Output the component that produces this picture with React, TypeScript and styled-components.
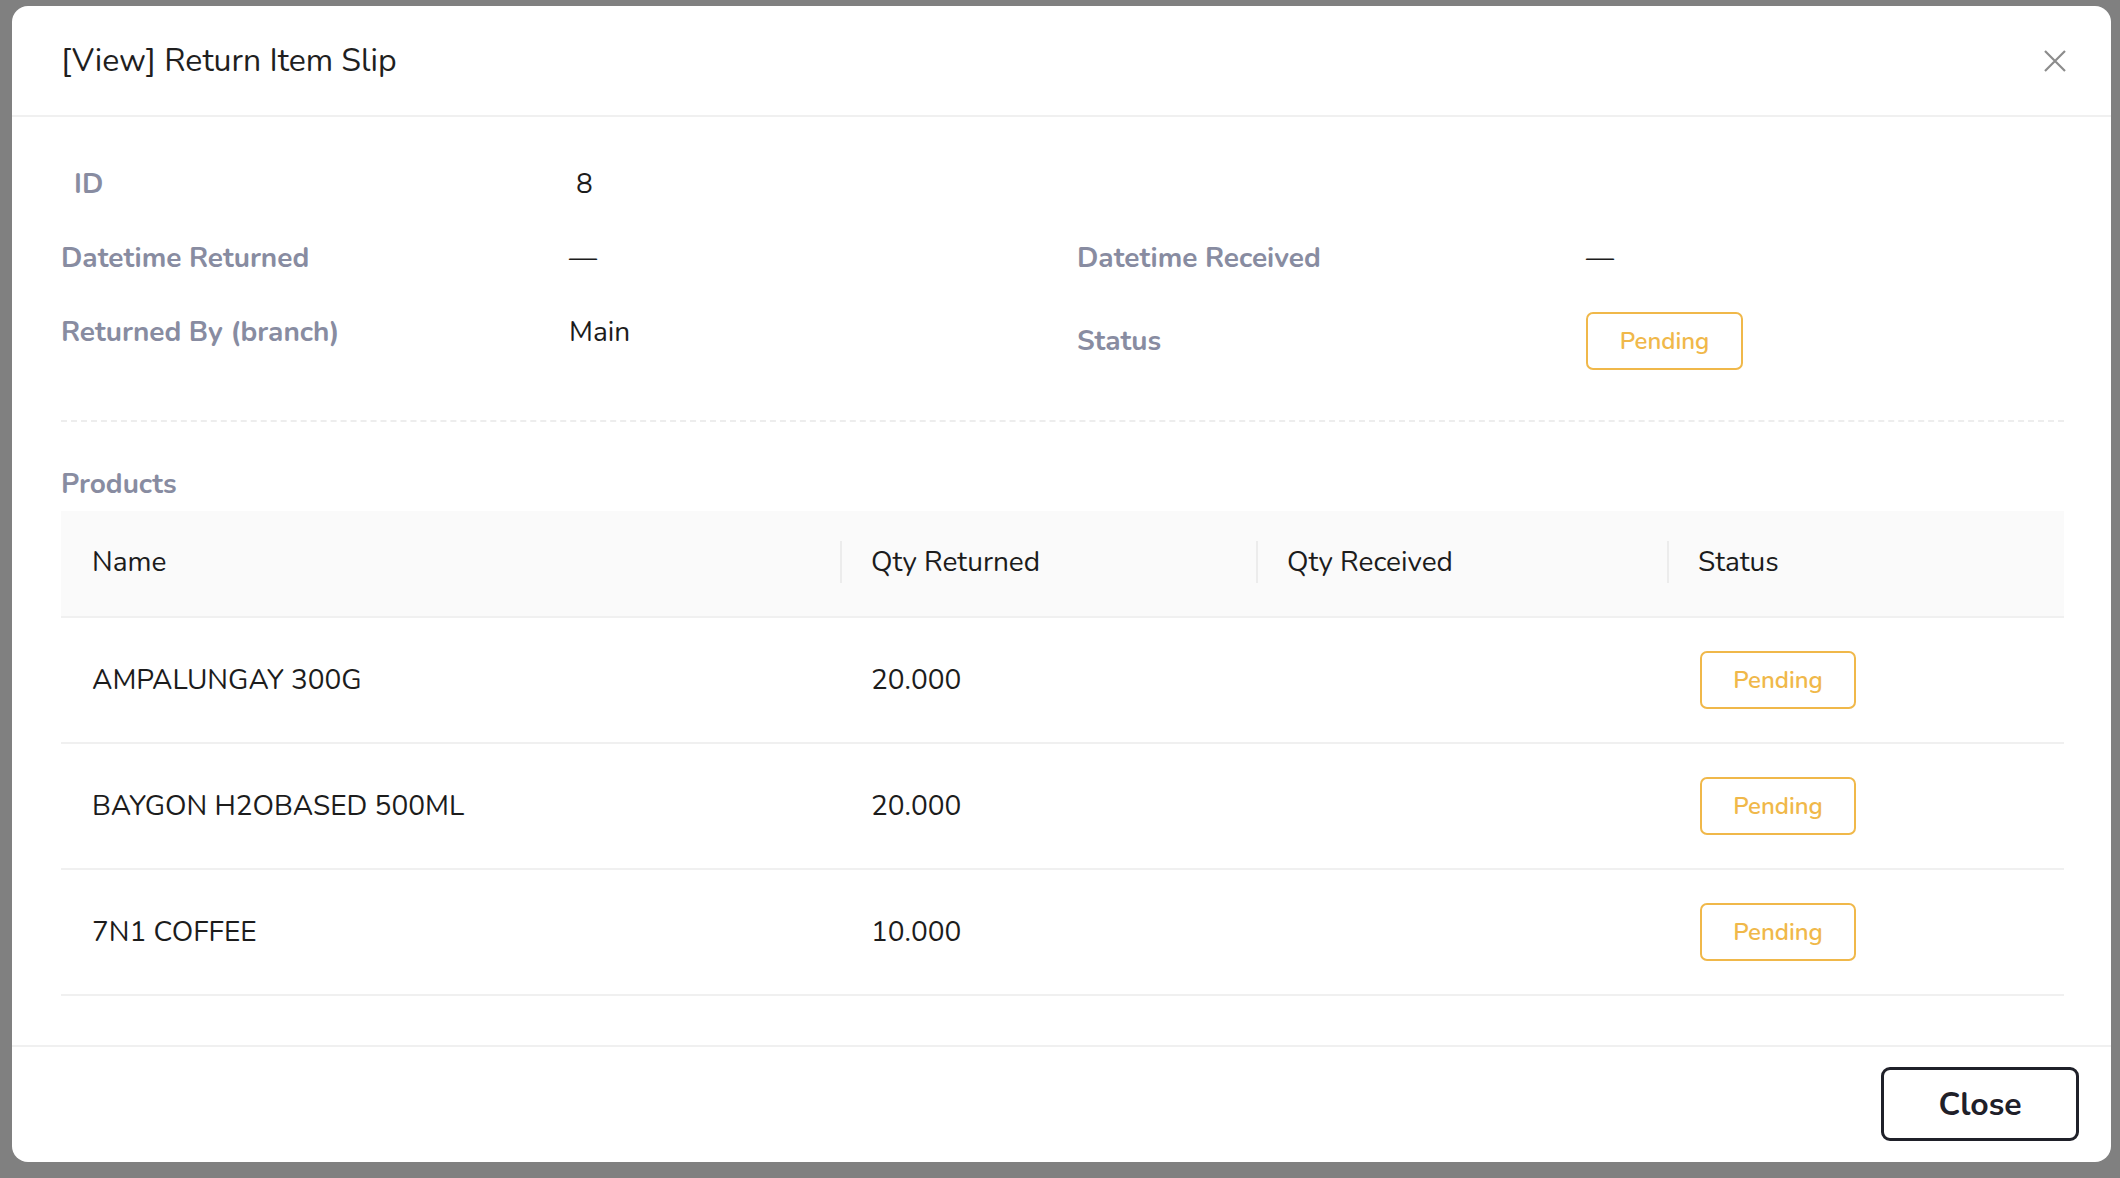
import React from "react";
import styled, { createGlobalStyle } from "styled-components";

const Global = createGlobalStyle`
  html, body { margin: 0; padding: 0; }
  body { font-family: "Nunito", "Lato", "Open Sans", sans-serif; }
  * { box-sizing: border-box; }
`;

const Backdrop = styled.div`
  width: 2120px;
  height: 1178px;
  background: #808080;
  padding: 6px 9px 16px 12px;
  display: flex;
`;

const Modal = styled.div`
  flex: 1;
  background: #ffffff;
  border-radius: 16px;
  display: flex;
  flex-direction: column;
  overflow: hidden;
`;

const Header = styled.div`
  height: 111px;
  flex: none;
  display: flex;
  align-items: center;
  justify-content: space-between;
  padding: 0 44px 0 49px;
  border-bottom: 2px solid #f0f0f0;
`;

const Title = styled.h1`
  margin: 0;
  font-size: 32px;
  font-weight: 400;
  color: #1f1f1f;
  line-height: 40px;
`;

const CloseIcon = styled.button`
  border: none;
  background: none;
  padding: 0;
  width: 24px;
  height: 24px;
  display: flex;
  align-items: center;
  justify-content: center;
  cursor: pointer;
`;

const Body = styled.div`
  flex: 1;
  padding: 47px 47px 49px 49px;
  display: flex;
  flex-direction: column;
  border-bottom: 2px solid #f0f0f0;
`;

const InfoGrid = styled.div`
  display: grid;
  grid-template-columns: 508px 508px 509px 1fr;
  row-gap: 34px;
  align-items: start;
  padding-bottom: 50px;
  border-bottom: 2px dashed #ededed;
`;

const Label = styled.div<{ $indent?: number; $center?: boolean }>`
  font-size: 28px;
  line-height: 40px;
  font-weight: 700;
  color: #888ca1;
  padding-left: ${(p) => p.$indent ?? 0}px;
  align-self: ${(p) => (p.$center ? "center" : "start")};
`;

const Value = styled.div<{ $indent?: number }>`
  font-size: 28px;
  line-height: 40px;
  color: #1c1c1c;
  padding-left: ${(p) => p.$indent ?? 0}px;
`;

const Badge = styled.span`
  display: inline-flex;
  align-items: center;
  justify-content: center;
  width: 157px;
  height: 58px;
  border: 2px solid #f0b84a;
  border-radius: 7px;
  color: #f0b84a;
  font-size: 24px;
  font-weight: 600;
`;

const SectionTitle = styled.div`
  margin-top: 42px;
  font-size: 28px;
  line-height: 40px;
  font-weight: 700;
  color: #888ca1;
  margin-bottom: 7px;
`;

const Table = styled.div`
  display: grid;
  grid-template-columns: 779px 416px 411px 1fr;
`;

const HeadCell = styled.div<{ $divider?: boolean }>`
  position: relative;
  height: 107px;
  background: #fafafa;
  border-bottom: 2px solid #f0f0f0;
  display: flex;
  align-items: center;
  padding-left: 31px;
  padding-bottom: 4px;
  font-size: 28px;
  color: #1c1c1c;
  &::before {
    content: "";
    display: ${(p) => (p.$divider ? "block" : "none")};
    position: absolute;
    left: 0;
    top: 30px;
    width: 2px;
    height: 42px;
    background: #ececec;
  }
`;

const Cell = styled.div`
  height: 126px;
  border-bottom: 2px solid #f0f0f0;
  display: flex;
  align-items: center;
  padding-left: 31px;
  font-size: 28px;
  color: #1c1c1c;
`;

const RowBadge = styled(Badge)`
  width: 156px;
  margin-left: 2px;
`;

const Footer = styled.div`
  flex: none;
  display: flex;
  justify-content: flex-end;
  padding: 20px 32px 21px 0;
`;

const CloseButton = styled.button`
  width: 198px;
  height: 74px;
  background: #ffffff;
  border: 3px solid #1f2029;
  border-radius: 9px;
  font-family: inherit;
  font-size: 32px;
  font-weight: 700;
  color: #1f2029;
  cursor: pointer;
`;

const products = [
  { name: "AMPALUNGAY 300G", qty: "20.000" },
  { name: "BAYGON H2OBASED 500ML", qty: "20.000" },
  { name: "7N1 COFFEE", qty: "10.000" },
];

export default function App() {
  return (
    <>
      <Global />
      <Backdrop>
        <Modal>
          <Header>
            <Title>[View] Return Item Slip</Title>
            <CloseIcon aria-label="close">
              <svg width="24" height="24" viewBox="0 0 24 24">
                <path d="M2 2 L22 22 M22 2 L2 22" stroke="#8c8c8c" strokeWidth="2.2" fill="none" />
              </svg>
            </CloseIcon>
          </Header>
          <Body>
            <InfoGrid>
              <Label $indent={13}>ID</Label>
              <Value $indent={7}>8</Value>
              <div />
              <div />
              <Label>Datetime Returned</Label>
              <Value>—</Value>
              <Label>Datetime Received</Label>
              <Value>—</Value>
              <Label>Returned By (branch)</Label>
              <Value>Main</Value>
              <Label $center>Status</Label>
              <div>
                <Badge>Pending</Badge>
              </div>
            </InfoGrid>
            <SectionTitle>Products</SectionTitle>
            <Table>
              <HeadCell>Name</HeadCell>
              <HeadCell $divider>Qty Returned</HeadCell>
              <HeadCell $divider>Qty Received</HeadCell>
              <HeadCell $divider>Status</HeadCell>
              {products.map((p) => (
                <React.Fragment key={p.name}>
                  <Cell>{p.name}</Cell>
                  <Cell>{p.qty}</Cell>
                  <Cell />
                  <Cell>
                    <RowBadge>Pending</RowBadge>
                  </Cell>
                </React.Fragment>
              ))}
            </Table>
          </Body>
          <Footer>
            <CloseButton>Close</CloseButton>
          </Footer>
        </Modal>
      </Backdrop>
    </>
  );
}
